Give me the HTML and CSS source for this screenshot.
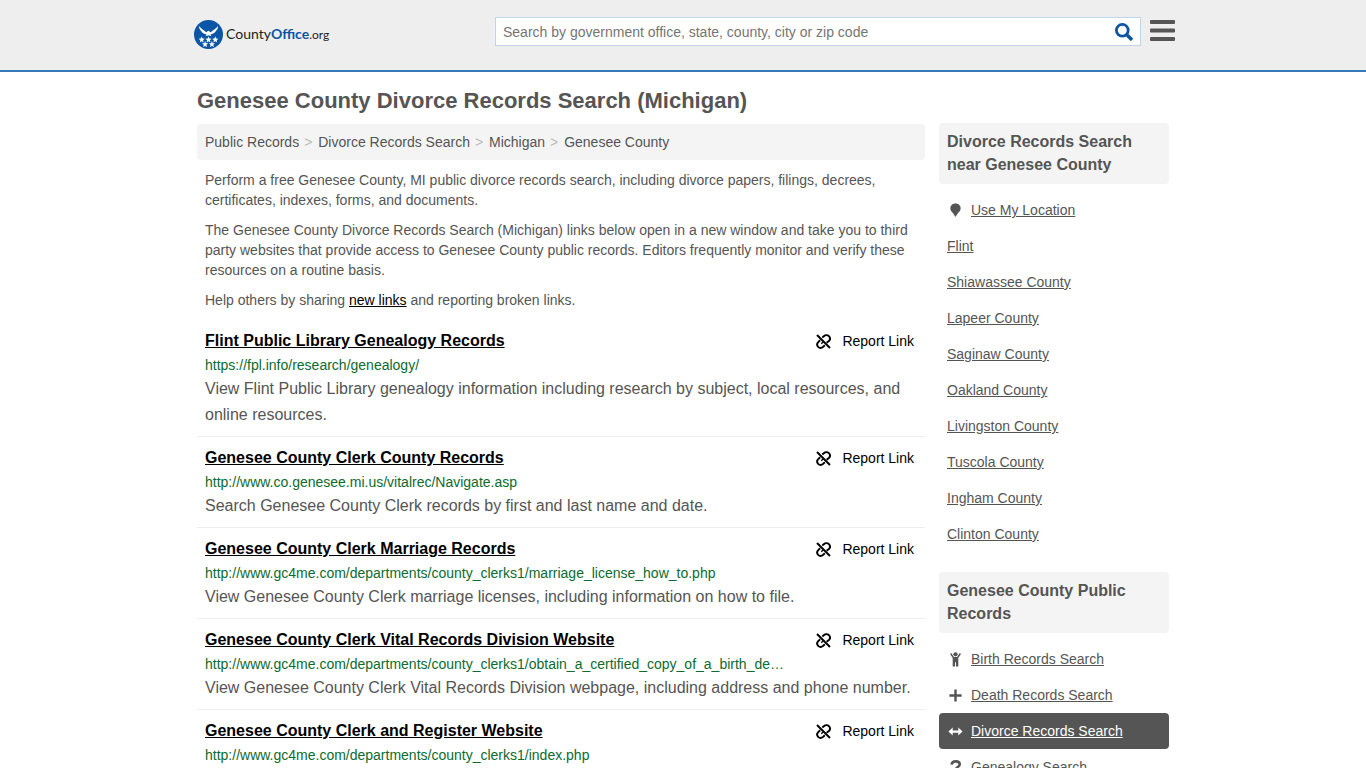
FILE: index.html
```
<!DOCTYPE html>
<html lang="en">
<head>
    <meta charset="utf-8">
    <meta name="viewport" content="width=device-width, initial-scale=1">
    <title>Genesee County Divorce Records Search (Michigan)</title>
    <link rel="stylesheet" href="styles.css">
</head>
<body>
    <!-- shared icons -->
    <svg class="sprite" aria-hidden="true">
        <symbol id="unlink" viewBox="0 0 15 15">
            <g fill="none" stroke="currentColor" stroke-width="1.900">
                <path d="M1 1L14 14"/>
                <path d="M6.300 3.500L7.800 2.200C9.300 .9 11.600 .9 12.900 2.200C14.200 3.500 14.200 5.600 12.900 7L10.600 8.800"/>
                <path d="M4.200 6.200L2.200 8.100C.9 9.500 .9 11.500 2.200 12.800C3.500 14.100 5.700 14.100 7.200 12.800L8.800 11.300"/>
                <path d="M7 8L5.300 9.700" stroke-width="1.300"/>
            </g>
        </symbol>
        <symbol id="star" viewBox="0 0 10 10">
            <path d="M5 0L6.300 3.500L10 3.700L7.100 6L8.100 9.700L5 7.600L1.900 9.700L2.900 6L0 3.700L3.700 3.500z"/>
        </symbol>
    </svg>

    <header class="header">
        <div class="header-inner">
            <a class="logo" href="#">
                <svg width="29" height="29" viewBox="0 0 29 29" aria-hidden="true">
                    <circle cx="14.500" cy="14.500" r="14.500" fill="#0a55a5"/>
                    <path fill="#fff" d="M5 6C7 9 9.500 9.500 12 12L13 12.300L13.500 11L15 10.700L16 12.300L17 12C19.500 9.500 22 9 24 6C24 8.500 23 10 22 10.800C21 12.500 20 13.500 18.800 13.700L16.500 14.500L17.300 16.200L14.500 15.300L11.700 16.200L12.500 14.500L10.200 13.700C9 13.500 8 12.500 7 10.800C6 10 5 8.500 5 6z"/>
                    <g fill="#fff">
                        <use href="#star" x="4.500" y="16.300" width="6.400" height="6.400"/>
                        <use href="#star" x="11.300" y="16.300" width="6.400" height="6.400"/>
                        <use href="#star" x="18.100" y="16.300" width="6.400" height="6.400"/>
                        <use href="#star" x="7.900" y="21" width="6.400" height="6.400"/>
                        <use href="#star" x="14.700" y="21" width="6.400" height="6.400"/>
                    </g>
                </svg>
                <span class="logo-text">County<b>Office</b><small>.org</small></span>
            </a>
            <form class="search">
                <input class="search-input" type="text" aria-label="Search" placeholder="Search by government office, state, county, city or zip code">
                <button class="search-btn" type="submit" aria-label="Search">
                    <svg width="18" height="18" viewBox="0 0 18 18" fill="none" stroke="#0a55a5">
                        <circle cx="7.300" cy="7.300" r="5.900" stroke-width="2.800"/>
                        <path d="M11.500 11.500L17 17" stroke-width="3.400"/>
                    </svg>
                </button>
            </form>
            <button class="menu-btn" type="button" aria-label="Menu">
                <svg width="25" height="21" viewBox="0 0 25 21" fill="#555">
                    <rect width="25" height="4" rx="1"/>
                    <rect y="8.500" width="25" height="4" rx="1"/>
                    <rect y="17" width="25" height="4" rx="1"/>
                </svg>
            </button>
        </div>
    </header>

    <div class="page">
        <main class="main">
            <h1 class="title">Genesee County Divorce Records Search (Michigan)</h1>
            <nav class="breadcrumb">
                <a href="#">Public Records</a><span>&gt;</span>
                <a href="#">Divorce Records Search</a><span>&gt;</span>
                <a href="#">Michigan</a><span>&gt;</span>
                <a href="#">Genesee County</a>
            </nav>
            <div class="intro">
                <p>Perform a free Genesee County, MI public divorce records search, including divorce papers, filings, decrees, certificates, indexes, forms, and documents.</p>
                <p>The Genesee County Divorce Records Search (Michigan) links below open in a new window and take you to third party websites that provide access to Genesee County public records. Editors frequently monitor and verify these resources on a routine basis.</p>
                <p>Help others by sharing <a href="#">new links</a> and reporting broken links.</p>
            </div>

            <div class="results">
                <div class="result">
                    <div class="result-head">
                        <a class="result-title" href="#">Flint Public Library Genealogy Records</a>
                        <a class="report" href="#"><svg><use href="#unlink"/></svg>Report Link</a>
                    </div>
                    <div class="result-url">https://fpl.info/research/genealogy/</div>
                    <div class="result-text">View Flint Public Library genealogy information including research by subject, local resources, and online resources.</div>
                </div>
                <div class="result">
                    <div class="result-head">
                        <a class="result-title" href="#">Genesee County Clerk County Records</a>
                        <a class="report" href="#"><svg><use href="#unlink"/></svg>Report Link</a>
                    </div>
                    <div class="result-url">http://www.co.genesee.mi.us/vitalrec/Navigate.asp</div>
                    <div class="result-text">Search Genesee County Clerk records by first and last name and date.</div>
                </div>
                <div class="result">
                    <div class="result-head">
                        <a class="result-title" href="#">Genesee County Clerk Marriage Records</a>
                        <a class="report" href="#"><svg><use href="#unlink"/></svg>Report Link</a>
                    </div>
                    <div class="result-url">http://www.gc4me.com/departments/county_clerks1/marriage_license_how_to.php</div>
                    <div class="result-text">View Genesee County Clerk marriage licenses, including information on how to file.</div>
                </div>
                <div class="result">
                    <div class="result-head">
                        <a class="result-title" href="#">Genesee County Clerk Vital Records Division Website</a>
                        <a class="report" href="#"><svg><use href="#unlink"/></svg>Report Link</a>
                    </div>
                    <div class="result-url">http://www.gc4me.com/departments/county_clerks1/obtain_a_certified_copy_of_a_birth_de…</div>
                    <div class="result-text">View Genesee County Clerk Vital Records Division webpage, including address and phone number.</div>
                </div>
                <div class="result">
                    <div class="result-head">
                        <a class="result-title" href="#">Genesee County Clerk and Register Website</a>
                        <a class="report" href="#"><svg><use href="#unlink"/></svg>Report Link</a>
                    </div>
                    <div class="result-url">http://www.gc4me.com/departments/county_clerks1/index.php</div>
                </div>
            </div>
        </main>

        <aside class="sidebar">
            <section>
                <h2 class="side-title">Divorce Records Search near Genesee County</h2>
                <ul class="side-list">
                    <li><svg viewBox="0 0 16 16"><path d="M8 .5C4.500 .5 2.500 3 2.500 5.500C2.500 9 6 10.500 8 15C10 10.500 13.500 9 13.500 5.500C13.500 3 11.500 .5 8 .5z"/></svg><a href="#">Use My Location</a></li>
                    <li><a href="#">Flint</a></li>
                    <li><a href="#">Shiawassee County</a></li>
                    <li><a href="#">Lapeer County</a></li>
                    <li><a href="#">Saginaw County</a></li>
                    <li><a href="#">Oakland County</a></li>
                    <li><a href="#">Livingston County</a></li>
                    <li><a href="#">Tuscola County</a></li>
                    <li><a href="#">Ingham County</a></li>
                    <li><a href="#">Clinton County</a></li>
                </ul>
            </section>
            <section>
                <h2 class="side-title">Genesee County Public Records</h2>
                <ul class="side-list">
                    <li><svg viewBox="0 0 16 16"><circle cx="8" cy="2.500" r="2.300"/><path d="M3.500 1L2.200 2.200L5 6.500V15.500H7.500V11H8.500V15.500H11V6.500L13.800 2.200L12.500 1L9.700 5.300H6.300z"/></svg><a href="#">Birth Records Search</a></li>
                    <li><svg viewBox="0 0 16 16"><path d="M6.700 1.500H9.300V6.700H14.500V9.300H9.300V14.500H6.700V9.300H1.500V6.700H6.700z"/></svg><a href="#">Death Records Search</a></li>
                    <li class="active"><svg viewBox="0 0 16 16"><path d="M.5 8L5 3.700V6.800H11V3.700L15.500 8L11 12.300V9.200H5V12.300z"/></svg><a href="#">Divorce Records Search</a></li>
                    <li><svg viewBox="0 0 16 16"><path d="M3.800 5C4.500 0 12.500 .5 12.500 4.800C12.500 7.500 8.300 7.500 8.300 10.500" fill="none" stroke="currentColor" stroke-width="2.800"/><rect x="6.800" y="12.500" width="3" height="3"/></svg><a href="#">Genealogy Search</a></li>
                </ul>
            </section>
        </aside>
    </div>
</body>
</html>
```
FILE: styles.css
```
* {
    box-sizing: border-box;
}
body {
    margin: 0;
    background: #fff;
    color: #555;
    font-family: "Liberation Sans", Arial, sans-serif;
    font-size: 14px;
    line-height: 20px;
}
a {
    color: inherit;
}
.sprite {
    display: none;
}

/* header */
.header {
    background: #eee;
    border-bottom: 2px solid #337ab7;
}
.header-inner {
    display: flex;
    align-items: flex-start;
    max-width: 984px;
    height: 70px;
    margin: 0 auto;
    padding: 17px 0 0 3px;
}
.logo {
    display: flex;
    align-items: center;
    gap: 3px;
    width: 301px;
    padding-top: 3px;
    color: #222;
    text-decoration: none;
}
.logo-text {
    font-family: Lato, sans-serif;
    font-size: 14px;
}
.logo-text b {
    color: #0a55a5;
}
.logo-text small {
    font-size: 12px;
}
.search {
    display: flex;
    flex: 1;
    height: 29px;
    background: #fff;
    border: 1px solid #bfd6ea;
}
.search-input {
    flex: 1;
    min-width: 0;
    padding: 0 7px;
    border: 0;
    background: none;
    font: inherit;
    color: #555;
}
.search-input::placeholder {
    color: #757575;
}
.search-btn,
.menu-btn {
    display: flex;
    padding: 0;
    border: 0;
    background: none;
    cursor: pointer;
}
.search-btn {
    align-items: center;
    padding-right: 7px;
}
.menu-btn {
    margin-left: 9px;
    padding-top: 3px;
}

/* columns */
.page {
    display: grid;
    grid-template-columns: 1fr 230px;
    gap: 14px;
    max-width: 972px;
    margin: 0 auto;
}
.title {
    margin: 13px 0 7px;
    font-size: 22px;
    line-height: 32px;
}
.breadcrumb {
    padding: 8px;
    background: #f4f4f4;
    border-radius: 4px;
}
.breadcrumb a {
    text-decoration: none;
}
.breadcrumb span {
    margin: 0 2px 0 5px;
    color: #bbb;
}
.intro {
    padding: 0 8px;
}
.intro p {
    margin: 10px 0;
}
.intro a {
    color: #000;
}

/* results */
.result {
    padding: 7px 8px 8px;
    border-bottom: 1px solid #eee;
}
.result-head {
    display: flex;
    justify-content: space-between;
    padding-right: 3px;
    line-height: 28px;
    color: #000;
}
.result-title {
    font-size: 16px;
    font-weight: bold;
}
.report {
    display: flex;
    align-items: center;
    gap: 11px;
    text-decoration: none;
}
.report svg {
    width: 15px;
    height: 15px;
}
.result-url {
    line-height: 21px;
    color: #0c6b2e;
}
.result-text {
    font-size: 16px;
    line-height: 26px;
}

/* sidebar */
.sidebar {
    padding-top: 51px;
}
.side-title {
    margin: 0 0 8px;
    padding: 7px 8px 8px;
    background: #f4f4f4;
    border-radius: 4px;
    font-size: 16px;
    line-height: 23px;
}
.side-list {
    margin: 0 0 20px;
    padding: 0;
    list-style: none;
}
.side-list li {
    display: flex;
    align-items: center;
    gap: 7px;
    height: 36px;
    padding: 0 8px;
    border-radius: 4px;
}
.side-list svg {
    width: 17px;
    height: 15px;
    fill: currentColor;
}
.side-list .active {
    background: #555;
    color: #fff;
}
```
